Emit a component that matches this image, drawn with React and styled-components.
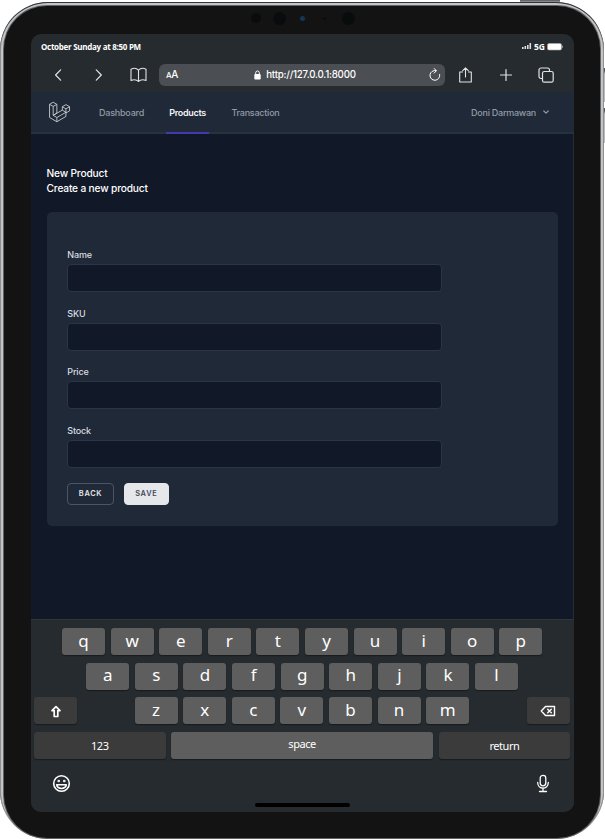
import React from "react";
import styled, { createGlobalStyle } from "styled-components";

const Global = createGlobalStyle`
  * { box-sizing: border-box; }
  body { margin: 0; background: #fff; overflow: hidden; }
`;
const Stage = styled.main`
  position: relative; width: 605px; height: 839px; padding-top: 2px; overflow: hidden;
  font-family: Inter, sans-serif;
`;
const Frame = styled.div`
  position: relative; width: 604px; height: 837px; padding: 4px 4px 1px;
  background: #c3c4c5; border-radius: 48px; box-shadow: inset 0 1px 0 #30343a, inset 0 0 0 1px #8d8f90;
`;
const Bezel = styled.div`
  width: 596px; height: 832px; padding: 28px 27px 0; border-radius: 43px; background: #131313;
  box-shadow: 0 0 0 1px #626364;
`;
const SideButton = styled.i`
  position: absolute; background: linear-gradient(#555 0 3px, #b8babc 6px);
  left: ${p => p.$x}px; top: ${p => p.$y}px; width: ${p => p.$w}px; height: ${p => p.$h}px;
`;
const Lens = styled.i`
  position: absolute; border-radius: 50%; background: ${p => p.$c || "#090c0d"};
  left: ${p => p.$x - p.$s / 2}px; top: ${p => 16 - p.$s / 2}px; width: ${p => p.$s}px; height: ${p => p.$s}px;
`;
const Screen = styled.div`
  display: flex; flex-direction: column; width: 543px; height: 778px;
  border-radius: 10px; overflow: hidden; background: #252b2e;
`;
const StatusBar = styled.div`
  height: 25px; flex: none; padding: 0 11px 0 10px; display: flex; justify-content: space-between; align-items: center;
  color: #fff; font: 700 8px/24px "Open Sans", sans-serif; letter-spacing: -.28px;
`;
const Signals = styled.div`display: flex; align-items: center; gap: 2px; font-size: 8.5px; letter-spacing: 0; svg { display: block; }`;
const Browser = styled.div`
  height: 33px; flex: none; display: flex; align-items: center; color: #e2e3e4; padding: 0 16px 2px 17px;
  svg { display: block; flex: none; }
`;
const Address = styled.div`
  width: 286px; height: 22px; margin: 0 12px 0 11px; padding: 0 4px 0 7px; border-radius: 6px; background: #4b4e52;
  display: flex; align-items: center; justify-content: space-between; color: #fff; font: 500 9.7px/22px Inter, sans-serif;
`;
const TextSize = styled.span`font-size: 10px; letter-spacing: -.4px; small { font-size: 8px; }`;
const Url = styled.span`display: flex; align-items: center; gap: 5px; letter-spacing: -.2px; padding-left: 3px;`;
const Nav = styled.nav`
  height: 42px; flex: none; display: flex; padding: 0 24px 0 18px; background: #202937; border-bottom: 2px solid #273240;
`;
const Logo = styled.svg`width: 22px; height: 22px; margin: 9px 21px 0 0;`;
const NavItem = styled.a`
  width: ${p => p.$w}px; height: 42px; margin-right: 15px; text-align: center; line-height: 41px;
  font-size: 9px; font-weight: ${p => p.$active ? 600 : 500}; letter-spacing: ${p => p.$ls || 0}px;
  color: ${p => p.$active ? "#f3f4f6" : "#929aa6"}; border-bottom: 2px solid ${p => p.$active ? "#4338ac" : "transparent"};
`;
const User = styled.div`
  margin-left: auto; display: flex; align-items: center; gap: 6px; height: 40px; color: #929aa6; font-size: 9px;
  font-weight: 500; letter-spacing: -.26px;
`;
const Page = styled.section`
  height: 485px; flex: none; padding: 32px 15px 0 15.5px; background: #111827; border-right: 1px solid #252d38;
`;
const Heading = styled.h1`margin: 0; color: #fff; font-size: 10.2px; font-weight: 500; line-height: 15px; letter-spacing: -.17px;`;
const Card = styled.form`
  width: 511px; height: 314px; margin-top: 16px; padding: 37px 20.8px 0; border-radius: 5px; background: #202937;
`;
const Field = styled.label`
  display: block; height: 58.5px; color: #d9dce1; font-size: 9px; font-weight: 500; line-height: 12px; letter-spacing: -.15px;
`;
const Input = styled.input`
  display: block; width: 375px; height: 28px; margin: 3px 0 0; border: 1px solid #2c3544; border-radius: 4px;
  background: #111827; color: #fff; outline: none;
`;
const Actions = styled.div`display: flex; gap: 10px;`;
const Action = styled.button`
  width: ${p => p.$w}px; height: 22px; padding: 0; border-radius: 4px; font: 600 7.4px/20px Inter, sans-serif; letter-spacing: .7px;
  color: ${p => p.$solid ? "#434958" : "#e5e7eb"}; background: ${p => p.$solid ? "#e5e7eb" : "#202937"};
  border: 1px solid ${p => p.$solid ? "#e5e7eb" : "#4b5563"};
`;
const Keyboard = styled.section`
  height: 193px; flex: none; background: #252b2e; border-top: 1px solid #303639; padding-top: 8px;
  font-family: "Noto Sans", sans-serif; color: #fff;
`;
const Keys = styled.div`
  display: flex; gap: 5.6px; height: 27px; margin-bottom: 7.7px; padding-left: ${p => p.$left}px;
`;
const Key = styled.div`
  width: ${p => p.$w || 43}px; height: 27px; flex: none; margin-left: ${p => p.$gap || 0}px;
  display: flex; align-items: center; justify-content: center; border-radius: 3px; padding-bottom: ${p => p.$up || 0}px;
  background: ${p => p.$dark ? "#3b3b3b" : "#5e5e5e"}; box-shadow: 0 1px 1px #171b1d;
  font-size: ${p => p.$small ? 11 : 17}px; line-height: 24px; letter-spacing: ${p => p.$small ? -.45 : 0}px;
`;
const Tools = styled.div`display: flex; justify-content: space-between; padding: 7px 22px 0 21px;`;
const HomeBar = styled.div`width: 95px; height: 4px; border-radius: 2px; background: #000; margin: 10px auto 0;`;

const Icon = ({ w = 16, h = 16, sw = 1.2, box = "0 0 16 16", children }) => (
  <svg width={w} height={h} viewBox={box} fill="none" stroke="currentColor" strokeWidth={sw} strokeLinecap="round" strokeLinejoin="round">{children}</svg>
);
const IconSlot = styled.span`display: flex; justify-content: center; width: ${p => p.$w}px; flex: none;`;

export default function App() {
  return <><Global /><Stage>
    <SideButton $x={520} $y={-3} $w={40} $h={6} />
    <SideButton $x={602} $y={68} $w={4} $h={34} />
    <SideButton $x={602} $y={108} $w={4} $h={35} />
    <Frame>
      <Lens $x={256} $s={10} /><Lens $x={279} $s={13} /><Lens $x={302} $s={5} $c="#143657" /><Lens $x={324} $s={3} $c="#0b0c0d" /><Lens $x={348} $s={13} />
      <Bezel><Screen>
        <StatusBar><span>October Sunday at 8:50 PM</span><Signals>
          <svg width="10" height="7"><path d="M0 4h1.6v2H0zM2.5 3h1.6v3H2.5zM5 2h1.6v4H5zM7.5 0h1.6v6H7.5z" fill="#ddd" /></svg>
          5G
          <svg width="16" height="8"><rect x=".5" y=".5" width="14" height="6.5" rx="1.5" fill="#fff" stroke="#aaa" strokeWidth=".6" /><path d="M15.4 2.7v2" stroke="#aaa" /></svg>
        </Signals></StatusBar>
        <Browser>
          <IconSlot $w={20}><Icon w={10} h={14} box="0 0 10 14"><path d="M7.6 1.8 2.6 7l5 5.2" /></Icon></IconSlot>
          <IconSlot $w={61}><Icon w={10} h={14} box="0 0 10 14"><path d="m2.3 1.8 5 5.2-5 5.2" /></Icon></IconSlot>
          <IconSlot $w={19}><Icon w={17} h={16} box="0 0 17 16" sw={1.1}><path d="M8.5 3.1C6.5 1 3.3 1 1 2.2v11.3c2.3-1 5.5-1 7.5.9 2-1.9 5.2-1.9 7.5-.9V2.2c-2.3-1.2-5.5-1.2-7.5.9v11.3" /></Icon></IconSlot>
          <Address><TextSize><small>A</small>A</TextSize><Url><svg width="7" height="10" viewBox="0 0 7 10"><rect x=".3" y="4" width="6.4" height="5.5" rx="1" fill="#fff" /><path d="M1.7 4V2.8a1.8 1.8 0 0 1 3.6 0V4" fill="none" stroke="#fff" /></svg>http://127.0.0.1:8000</Url>
            <Icon w={12} h={14} box="0 0 12 14" sw={1}><path d="M10.7 6.5A4.9 4.9 0 1 1 7 2.6M5.2.5l2.2 2.2-2.2 2.4" /></Icon></Address>
          <Icon w={18} h={18} box="0 0 18 18" sw={1.1}><path d="M5.5 6H2.7v10h11.6V6h-2.8M8.5 11V2M5.7 4.7l2.8-2.9 2.8 2.9" /></Icon>
          <IconSlot $w={62}><Icon w={14} h={14} box="0 0 14 14"><path d="M1.5 7h11M7 1.5v11" /></Icon></IconSlot>
          <Icon w={18} h={18} box="0 0 18 18"><rect x="5.5" y="5.5" width="10.7" height="10.7" rx="1.8" /><path d="M5 12.5H4A2 2 0 0 1 2 10.5V4a2 2 0 0 1 2-2h6.5a2 2 0 0 1 2 2v1" /></Icon>
        </Browser>
        <Nav>
          <Logo viewBox="6 0 316 316" fill="none" stroke="#c8cbd0" strokeWidth="13" strokeLinejoin="round"><path d="M14 48 66 18l53 30v127l-53 31V78zM66 78l53-30M14 48v189l105 61 130-76v-60L119 237l-53-31 131-75V82l52-30 52 30v60l-52 30v-60l52-30M197 82l52 30M197 131l52 31M119 237v61" /></Logo>
          <NavItem $w={59} $ls={-.2}>Dashboard</NavItem><NavItem $active $w={43} $ls={-.3}>Products</NavItem><NavItem $w={63} $ls={-.24}>Transaction</NavItem>
          <User>Doni Darmawan<Icon w={8} h={8} box="0 0 8 8"><path d="m1.8 3 2.2 2.2L6.2 3" /></Icon></User>
        </Nav>
        <Page><Heading>New Product</Heading><Heading as="p">Create a new product</Heading>
          <Card>{["Name", "SKU", "Price", "Stock"].map(n => <Field key={n}>{n}<Input /></Field>)}
            <Actions><Action type="button" $w={46.5}>BACK</Action><Action type="button" $solid $w={45}>SAVE</Action></Actions></Card>
        </Page>
        <Keyboard>
          <Keys $left={31}>{[..."qwertyuiop"].map(k => <Key key={k} $up={2}>{k}</Key>)}</Keys>
          <Keys $left={55.3}>{[..."asdfghjkl"].map(k => <Key key={k} $up={2}>{k}</Key>)}</Keys>
          <Keys $left={3}><Key $dark><Icon w={12} h={15} box="0 0 12 15" sw={1.7}><path d="M6 3.7 2 7.6h2.2v5.9h3.6V7.6H10z" /></Icon></Key>
            {[..."zxcvbnm"].map((k, i) => <Key key={k} $gap={i ? 0 : 52} $up={1}>{k}</Key>)}
            <Key $dark $gap={52}><Icon w={16} h={12} box="0 0 16 12" sw={1.4}><path d="M5.5 1.5h9v9h-9L1.3 6zM7.7 4.2l3.6 3.6m0-3.6L7.7 7.8" /></Icon></Key></Keys>
          <Keys $left={3}><Key $dark $small $w={131.5}>123</Key><Key $small $w={262} $up={4}>space</Key><Key $dark $small $w={131.5}>return</Key></Keys>
          <Tools>
            <Icon w={19} h={19} box="0 0 19 19" sw={1.6}><circle cx="9.5" cy="9.5" r="7.8" /><circle cx="6.7" cy="7" r=".5" /><circle cx="12.3" cy="7" r=".5" /><path d="M4.7 10.7h9.6c-.6 5-9 5-9.6 0z" /></Icon>
            <Icon w={18} h={19} box="0 0 18 19" sw={1.3}><rect x="6.2" y="1.3" width="5.6" height="10.5" rx="2.8" /><path d="M3.7 8.5c0 7.4 10.6 7.4 10.6 0M9 14v3.5M5.5 17.5h7" /></Icon>
          </Tools>
          <HomeBar />
        </Keyboard>
      </Screen></Bezel>
    </Frame>
  </Stage></>;
}
